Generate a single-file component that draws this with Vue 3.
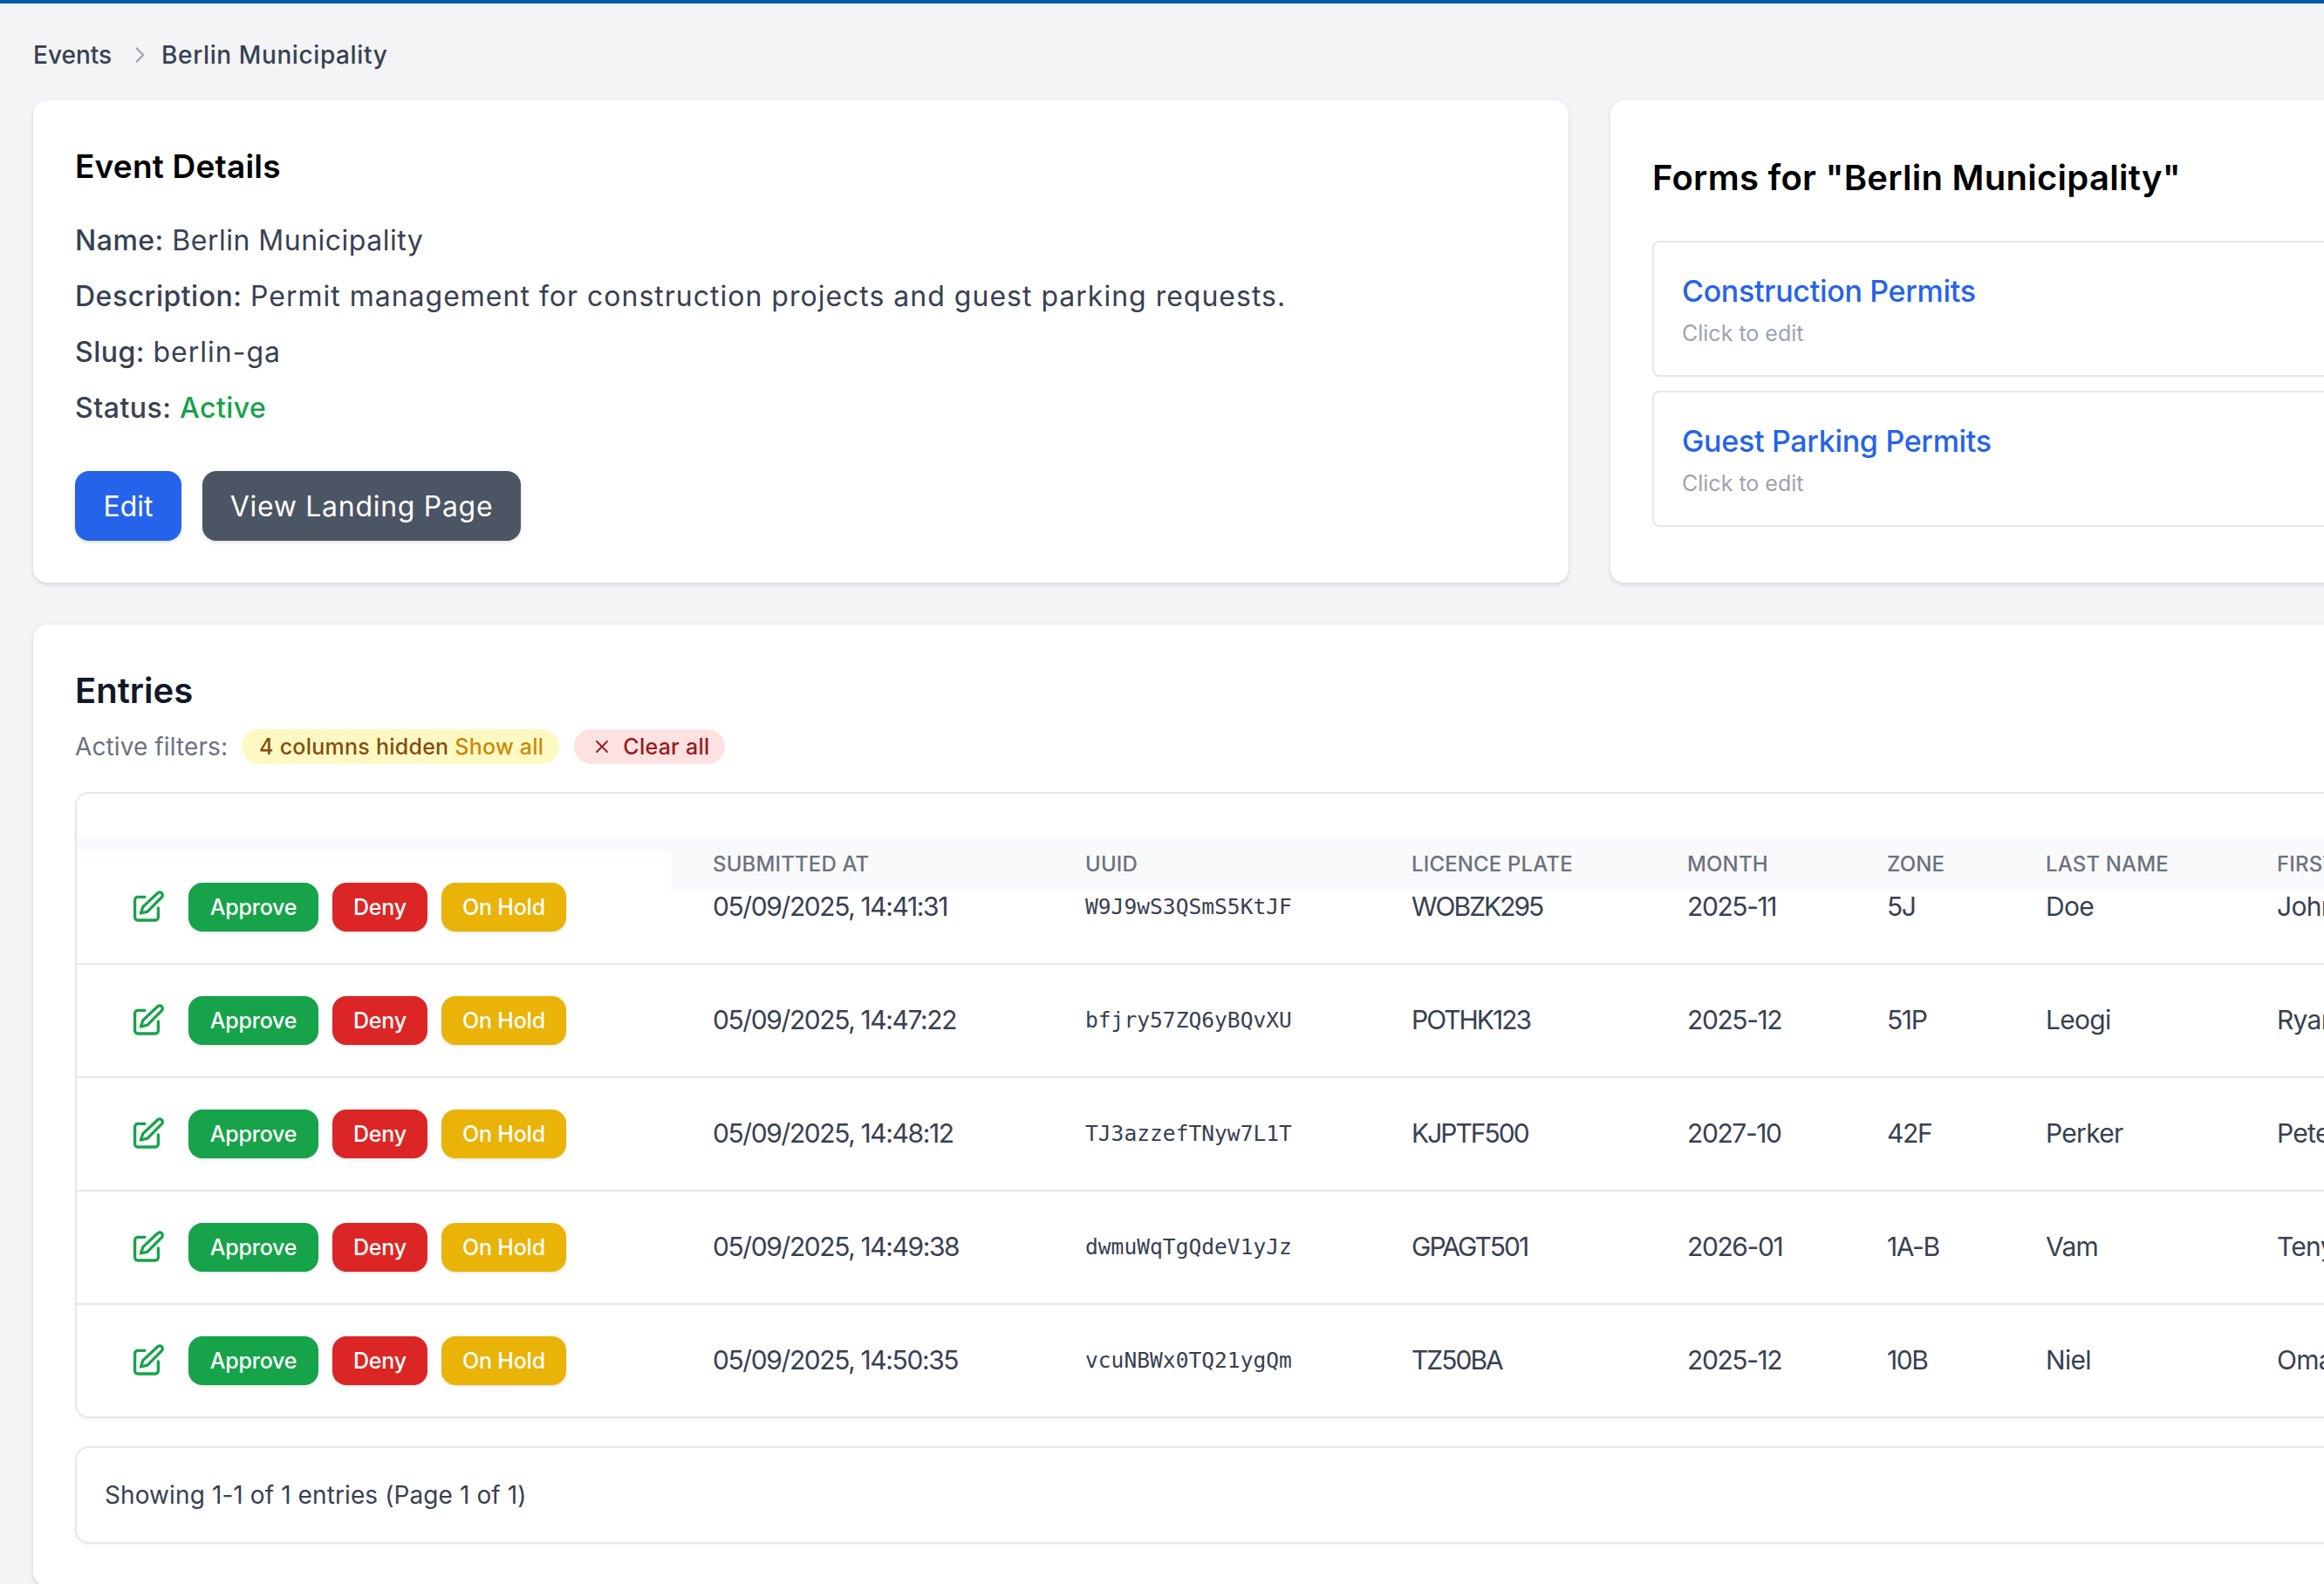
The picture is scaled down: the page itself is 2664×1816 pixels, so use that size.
<template>
  <div class="page">
    <div class="topbar"></div>
    <main class="main">
      <nav class="crumbs">
        <span>Events</span>
        <svg class="chev" viewBox="0 0 20 20" fill="none" stroke="currentColor" stroke-width="1.5" stroke-linecap="round" stroke-linejoin="round">
          <path d="M7.5 4.5 13 10l-5.5 5.5" />
        </svg>
        <span class="crumb-current">Berlin Municipality</span>
      </nav>

      <div class="top-grid">
        <section class="card details">
          <h2 class="details-title">Event Details</h2>
          <p class="line"><b>Name:</b> Berlin Municipality</p>
          <p class="line"><b>Description:</b> <span class="wide">Permit management for construction projects and guest parking requests.</span></p>
          <p class="line"><b>Slug:</b> <span class="wide">berlin-ga</span></p>
          <p class="line"><b>Status:</b> <span class="active">Active</span></p>
          <div class="details-actions">
            <button class="big-btn blue">Edit</button>
            <button class="big-btn slate">View Landing Page</button>
          </div>
        </section>

        <section class="card forms">
          <h2 class="forms-title">Forms for "Berlin Municipality"</h2>
          <div v-for="f in forms" :key="f" class="form-item">
            <div class="form-name">{{ f }}</div>
            <div class="form-hint">Click to edit</div>
          </div>
        </section>
      </div>

      <section class="card entries">
        <h2 class="entries-title">Entries</h2>
        <div class="filters">
          <span class="filters-label">Active filters:</span>
          <span class="pill yellow">4 columns hidden <em>Show all</em></span>
          <span class="pill red">
            <svg class="x" viewBox="0 0 20 20" fill="none" stroke="currentColor" stroke-width="1.6" stroke-linecap="round">
              <path d="M5 5l10 10M15 5 5 15" />
            </svg>
            Clear all
          </span>
        </div>

        <div class="table">
          <div class="head cols">
            <div></div>
            <div v-for="h in headers" :key="h" class="th">{{ h }}</div>
          </div>
          <div v-for="r in rows" :key="r.uuid" class="row cols">
            <div class="actions">
              <svg class="edit" viewBox="0 0 50 50" fill="none" stroke="currentColor" stroke-width="3.3" stroke-linecap="round" stroke-linejoin="round">
                <path d="M21 13.3h-8a3.4 3.4 0 0 0-3.4 3.4v19.9a3.4 3.4 0 0 0 3.4 3.4h20a3.4 3.4 0 0 0 3.4-3.4V26" />
                <path d="M16.5 32l2.4-7.4L35.6 9a3.3 3.3 0 0 1 4.8 4.6L24 30.2z" />
              </svg>
              <button class="act green">Approve</button>
              <button class="act crimson">Deny</button>
              <button class="act amber">On Hold</button>
            </div>
            <div class="td tight">{{ r.at }}</div>
            <div class="td mono">{{ r.uuid }}</div>
            <div class="td plate">{{ r.plate }}</div>
            <div class="td tight">{{ r.month }}</div>
            <div class="td tight">{{ r.zone }}</div>
            <div class="td">{{ r.last }}</div>
            <div class="td">{{ r.first }}</div>
          </div>
        </div>

        <div class="pager">Showing 1-1 of 1 entries (Page 1 of 1)</div>
      </section>
    </main>
  </div>
</template>

<script setup>
const forms = ['Construction Permits', 'Guest Parking Permits']
const headers = ['Submitted at', 'UUID', 'Licence plate', 'Month', 'Zone', 'Last name', 'First name']
const rows = [
  { at: '05/09/2025, 14:41:31', uuid: 'W9J9wS3QSmS5KtJF', plate: 'WOBZK295', month: '2025-11', zone: '5J', last: 'Doe', first: 'John' },
  { at: '05/09/2025, 14:47:22', uuid: 'bfjry57ZQ6yBQvXU', plate: 'POTHK123', month: '2025-12', zone: '51P', last: 'Leogi', first: 'Ryan' },
  { at: '05/09/2025, 14:48:12', uuid: 'TJ3azzefTNyw7L1T', plate: 'KJPTF500', month: '2027-10', zone: '42F', last: 'Perker', first: 'Peter' },
  { at: '05/09/2025, 14:49:38', uuid: 'dwmuWqTgQdeV1yJz', plate: 'GPAGT501', month: '2026-01', zone: '1A-B', last: 'Vam', first: 'Teny' },
  { at: '05/09/2025, 14:50:35', uuid: 'vcuNBWx0TQ21ygQm', plate: 'TZ50BA', month: '2025-12', zone: '10B', last: 'Niel', first: 'Omar' }
]
</script>

<style scoped>
.page {
  width: 2664px;
  height: 1816px;
  overflow: hidden;
  background: #f3f4f6;
  font-family: Inter, "Noto Sans", sans-serif;
  color: #374151;
}

.topbar {
  height: 4px;
  background: #0058a6;
}

.main {
  width: 3606px;
  padding: 38px 0 0 38px;
  box-sizing: border-box;
}

.crumbs {
  display: flex;
  align-items: center;
  height: 42px;
  margin-bottom: 31px;
  font-size: 28px;
  font-weight: 500;
}

.crumb-current {
  letter-spacing: 0.6px;
}

.chev {
  width: 28px;
  height: 28px;
  margin: 0 11px 0 18px;
  color: #9ca3af;
}

.top-grid {
  display: grid;
  grid-template-columns: 1760px 1760px;
  column-gap: 48px;
}

.card {
  background: #fff;
  border-radius: 16px;
  box-shadow: 0 2px 6px rgba(0, 0, 0, 0.1), 0 2px 4px rgba(0, 0, 0, 0.04);
  padding: 48px;
  box-sizing: border-box;
}

h2 {
  margin: 0;
  font-weight: 600;
  color: #000;
}

.details-title {
  font-size: 37px;
  letter-spacing: 0.2px;
  line-height: 56px;
  margin-bottom: 33px;
}

.line {
  margin: 0 0 16px;
  font-size: 32px;
  line-height: 48px;
  letter-spacing: 0.5px;
}

.line b {
  font-weight: 500;
}

.wide {
  letter-spacing: 1px;
}

.active {
  color: #16a34a;
  font-weight: 500;
}

.details-actions {
  display: flex;
  gap: 24px;
  margin-top: 48px;
}

button {
  border: 0;
  padding: 0;
  font-family: inherit;
  color: #fff;
}

.big-btn {
  height: 80px;
  border-radius: 16px;
  font-size: 32px;
  box-shadow: 0 2px 4px rgba(0, 0, 0, 0.12);
}

.blue {
  width: 122px;
  background: #2563eb;
}

.slate {
  width: 365px;
  letter-spacing: 0.7px;
  background: #4b5563;
}

.forms-title {
  margin: 9px 0 40px;
  font-size: 40px;
  letter-spacing: 0.27px;
  line-height: 64px;
}

.form-item {
  border: 2px solid #e5e7eb;
  border-radius: 8px;
  padding: 32px 32px 28px;
  margin-bottom: 16px;
}

.form-name {
  font-size: 34px;
  letter-spacing: -0.3px;
  line-height: 48px;
  font-weight: 500;
  color: #2563eb;
}

.form-hint {
  margin-top: 4px;
  font-size: 25px;
  line-height: 40px;
  color: #9ca3af;
}

.entries {
  width: 3568px;
  margin-top: 48px;
}

.entries-title {
  font-size: 40px;
  line-height: 56px;
  margin-bottom: 16px;
  color: #111827;
}

.filters {
  display: flex;
  align-items: center;
  height: 40px;
  margin-bottom: 32px;
  font-size: 28px;
}

.filters-label {
  color: #6b7280;
  margin-right: 16px;
  letter-spacing: 0.1px;
}

.pill {
  display: flex;
  align-items: center;
  height: 40px;
  border-radius: 20px;
  padding: 0 18px 0 20px;
  font-size: 25px;
  font-weight: 500;
  letter-spacing: 0.25px;
}

.yellow {
  background: #fef9c3;
  color: #854d0e;
  margin-right: 17px;
  white-space: pre;
}

.yellow em {
  font-style: normal;
  color: #ca8a04;
}

.red {
  background: #fee2e2;
  color: #991b1b;
}

.x {
  width: 24px;
  height: 24px;
  margin-right: 12px;
}

.table {
  position: relative;
  border: 2px solid #e5e7eb;
  border-radius: 16px;
  padding-top: 66px;
  overflow: hidden;
  box-shadow: 0 2px 4px rgba(0, 0, 0, 0.05);
}

.cols {
  display: grid;
  grid-template-columns: 681px 427px 374px 316px 229px 182px 265px 1fr;
}

.head {
  position: absolute;
  top: 48px;
  left: 0;
  right: 0;
  height: 64px;
  align-items: center;
  background: #f9fafb;
}

.th {
  padding-left: 48px;
  font-size: 24px;
  font-weight: 500;
  letter-spacing: 0.15px;
  text-transform: uppercase;
  color: #6b7280;
}

.row {
  height: 130px;
  box-sizing: border-box;
  border-bottom: 2px solid #e5e7eb;
  align-items: center;
}

.row:last-child {
  height: 128px;
  border-bottom: 0;
}

.actions {
  position: relative;
  z-index: 1;
  display: flex;
  align-items: center;
  gap: 16px;
  height: 100%;
  padding-left: 57px;
  background: #fff;
}

.edit {
  width: 50px;
  height: 50px;
  margin-right: 5px;
  color: #16a34a;
}

.act {
  height: 56px;
  border-radius: 16px;
  font-size: 25px;
  font-weight: 500;
  letter-spacing: -0.2px;
  box-shadow: 0 2px 3px rgba(0, 0, 0, 0.08);
}

.green {
  width: 149px;
  background: #16a34a;
}

.crimson {
  width: 109px;
  background: #dc2626;
}

.amber {
  width: 143px;
  background: #eab308;
}

.td {
  padding: 0 0 2px 48px;
  font-size: 30px;
  letter-spacing: -0.7px;
  white-space: nowrap;
}

.tight {
  letter-spacing: -1.4px;
}

.plate {
  letter-spacing: -2px;
}

.mono {
  font-family: "DejaVu Sans Mono", monospace;
  font-size: 24.6px;
  letter-spacing: 0;
}

.pager {
  margin-top: 32px;
  border: 2px solid #e5e7eb;
  border-radius: 16px;
  padding: 32px;
  font-size: 28px;
  letter-spacing: 0.1px;
  line-height: 44px;
  box-shadow: 0 2px 4px rgba(0, 0, 0, 0.05);
}
</style>

<style>
html,
body {
  margin: 0;
  overflow: hidden;
  background: #f3f4f6;
}
</style>
